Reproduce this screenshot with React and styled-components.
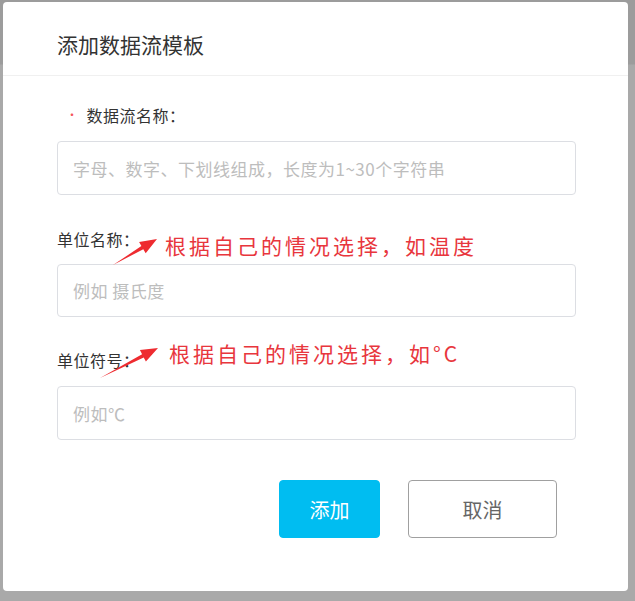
import React from "react";
import styled, { createGlobalStyle } from "styled-components";

const GlobalStyle = createGlobalStyle`
  html, body {
    margin: 0;
    padding: 0;
  }
  body {
    width: 635px;
    height: 601px;
    overflow: hidden;
    background: linear-gradient(
      to bottom,
      #9c9c9c 0px,
      #9c9c9c 64px,
      #a9a9a9 65px,
      #a9a9a9 100%
    );
    font-family: "Noto Sans CJK SC", "Noto Sans", sans-serif;
  }
`;

const Backdrop = styled.div`
  padding: 2px 0 0 3px;
  height: 601px;
  box-sizing: border-box;
`;

const Modal = styled.div`
  position: relative;
  width: 625px;
  height: 589px;
  background: #fff;
  border-radius: 4px;
  box-sizing: border-box;
  display: flex;
  flex-direction: column;
`;

const Header = styled.div`
  height: 74px;
  display: flex;
  align-items: center;
  padding: 0 0 0 54px;
  border-bottom: 1px solid #f0f0f0;
  box-sizing: border-box;
`;

const Title = styled.h3`
  margin: 0;
  font-size: 21px;
  font-weight: 400;
  color: #333;
  line-height: 28px;
  padding-top: 10px;
`;

const Body = styled.div`
  padding: 29px 52px 0 54px;
  display: flex;
  flex-direction: column;
`;

const Field = styled.div`
  display: flex;
  flex-direction: column;
  margin-top: ${(p) => p.$top || 0}px;
`;

const Label = styled.label`
  display: flex;
  align-items: center;
  font-size: 16px;
  letter-spacing: 0.5px;
  line-height: 20px;
  color: #333;
  padding-left: ${(p) => (p.$required ? 9 : 0)}px;
  margin-bottom: ${(p) => p.$gap || 16}px;
`;

const Star = styled.span`
  color: #f5565b;
  font-size: 12px;
  margin-right: 8px;
`;

const Input = styled.input`
  height: ${(p) => p.$h || 54}px;
  box-sizing: border-box;
  border: 1px solid #dcdee3;
  border-radius: 4px;
  padding: 0 15px;
  font-family: inherit;
  font-size: 17px;
  letter-spacing: 0.5px;
  color: #333;
  outline: none;
  &::placeholder {
    color: #bdbdbd;
  }
`;

const Footer = styled.div`
  display: flex;
  justify-content: flex-end;
  gap: 28px;
  padding: 40px 71px 0 0;
`;

const Button = styled.button`
  height: 58px;
  width: ${(p) => p.$w}px;
  border-radius: 4px;
  font-family: inherit;
  font-size: 20px;
  cursor: pointer;
  border: 1px solid ${(p) => (p.$primary ? "#00bdf1" : "#a0a0a0")};
  background: ${(p) => (p.$primary ? "#00bdf1" : "#fff")};
  color: ${(p) => (p.$primary ? "#fff" : "#666")};
`;

const Note = styled.div`
  position: absolute;
  left: ${(p) => p.$x}px;
  top: ${(p) => p.$y}px;
  font-size: 21px;
  line-height: 30px;
  letter-spacing: 3px;
  color: #e8363d;
  white-space: nowrap;
`;

const Overlay = styled.svg`
  position: absolute;
  left: 0;
  top: 0;
  pointer-events: none;
`;

function arrowPoints(tx, ty, hx, hy) {
  const dx = hx - tx;
  const dy = hy - ty;
  const len = Math.hypot(dx, dy);
  const ux = dx / len;
  const uy = dy / len;
  const nx = -uy;
  const ny = ux;
  const hl = 17;
  const hw = 6.5;
  const sw = 1.8;
  const bx = hx - hl * ux;
  const by = hy - hl * uy;
  const pts = [
    [tx, ty],
    [bx + sw * nx, by + sw * ny],
    [bx + hw * nx, by + hw * ny],
    [hx, hy],
    [bx - hw * nx, by - hw * ny],
    [bx - sw * nx, by - sw * ny],
  ];
  return pts.map((p) => p.map((v) => v.toFixed(1)).join(",")).join(" ");
}

export default function App() {
  return (
    <>
      <GlobalStyle />
      <Backdrop>
        <Modal>
          <Header>
            <Title>添加数据流模板</Title>
          </Header>
          <Body>
            <Field>
              <Label $required>
                <Star>•</Star>数据流名称：
              </Label>
              <Input placeholder="字母、数字、下划线组成，长度为1~30个字符串" />
            </Field>
            <Field $top={34}>
              <Label $gap={15}>单位名称：</Label>
              <Input $h={53} placeholder="例如 摄氏度" />
            </Field>
            <Field $top={33}>
              <Label>单位符号：</Label>
              <Input placeholder="例如℃" />
            </Field>
          </Body>
          <Footer>
            <Button $primary $w={101}>添加</Button>
            <Button $w={149}>取消</Button>
          </Footer>

          <Note $x={162} $y={228}>根据自己的情况选择，如温度</Note>
          <Note $x={166} $y={336}>根据自己的情况选择，如°C</Note>
          <Overlay width="625" height="589" viewBox="0 0 625 589">
            <polygon points={arrowPoints(110, 263, 154, 237)} fill="#ee2b30" />
            <polygon points={arrowPoints(97, 376, 155, 346)} fill="#ee2b30" />
          </Overlay>
        </Modal>
      </Backdrop>
    </>
  );
}
